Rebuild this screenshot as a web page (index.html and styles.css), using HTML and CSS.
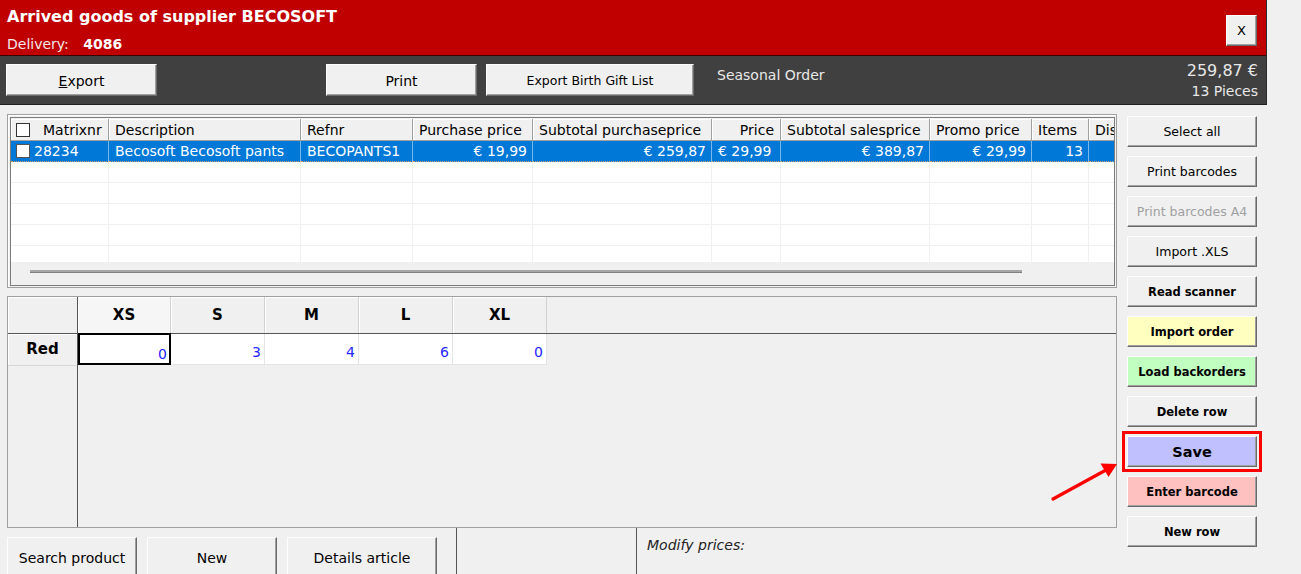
FILE: index.html
```html
<!DOCTYPE html>
<html lang="en">
<head>
    <meta charset="UTF-8">
    <title>Arrived goods of supplier BECOSOFT</title>
    <link rel="stylesheet" href="styles.css">
</head>
<body>
    <div class="window">
        <div class="titlebar">
            <div>
                <div class="title">Arrived goods of supplier BECOSOFT</div>
                <div class="delivery">Delivery: <b>4086</b></div>
            </div>
            <button class="btn close">X</button>
        </div>
        <div class="toolbar">
            <button class="btn tb-export"><u>E</u>xport</button>
            <button class="btn tb-print">Print</button>
            <button class="btn tb-birth">Export Birth Gift List</button>
            <div class="order-type">Seasonal Order</div>
            <div class="totals">
                <div class="total-amount">259,87 €</div>
                <div class="total-pieces">13 Pieces</div>
            </div>
        </div>
    </div>

    <div class="content">
        <div class="main">
            <div class="grid-box">
                <div class="grid">
                    <div class="grid-row grid-head">
                        <div class="cell"><span class="check"></span><span class="head-first">Matrixnr</span></div>
                        <div class="cell">Description</div>
                        <div class="cell">Refnr</div>
                        <div class="cell">Purchase price</div>
                        <div class="cell">Subtotal purchaseprice</div>
                        <div class="cell num">Price</div>
                        <div class="cell">Subtotal salesprice</div>
                        <div class="cell">Promo price</div>
                        <div class="cell">Items</div>
                        <div class="cell">Dis</div>
                    </div>
                    <div class="grid-body">
                        <div class="grid-row selected">
                            <div class="cell"><span class="check"></span>28234</div>
                            <div class="cell">Becosoft Becosoft pants</div>
                            <div class="cell">BECOPANTS1</div>
                            <div class="cell num">€ 19,99</div>
                            <div class="cell num">€ 259,87</div>
                            <div class="cell">€ 29,99</div>
                            <div class="cell num">€ 389,87</div>
                            <div class="cell num">€ 29,99</div>
                            <div class="cell num">13</div>
                            <div class="cell"></div>
                        </div>
                        <div class="grid-row"><div class="cell"></div><div class="cell"></div><div class="cell"></div><div class="cell"></div><div class="cell"></div><div class="cell"></div><div class="cell"></div><div class="cell"></div><div class="cell"></div><div class="cell"></div></div>
                        <div class="grid-row"><div class="cell"></div><div class="cell"></div><div class="cell"></div><div class="cell"></div><div class="cell"></div><div class="cell"></div><div class="cell"></div><div class="cell"></div><div class="cell"></div><div class="cell"></div></div>
                        <div class="grid-row"><div class="cell"></div><div class="cell"></div><div class="cell"></div><div class="cell"></div><div class="cell"></div><div class="cell"></div><div class="cell"></div><div class="cell"></div><div class="cell"></div><div class="cell"></div></div>
                        <div class="grid-row"><div class="cell"></div><div class="cell"></div><div class="cell"></div><div class="cell"></div><div class="cell"></div><div class="cell"></div><div class="cell"></div><div class="cell"></div><div class="cell"></div><div class="cell"></div></div>
                        <div class="grid-row"><div class="cell"></div><div class="cell"></div><div class="cell"></div><div class="cell"></div><div class="cell"></div><div class="cell"></div><div class="cell"></div><div class="cell"></div><div class="cell"></div><div class="cell"></div></div>
                    </div>
                    <div class="hscroll"><div class="hscroll-thumb"></div></div>
                </div>
            </div>

            <div class="sizes">
                <div class="sizes-head">
                    <div class="corner"></div>
                    <div class="size-col active">XS</div>
                    <div class="size-col">S</div>
                    <div class="size-col">M</div>
                    <div class="size-col">L</div>
                    <div class="size-col">XL</div>
                </div>
                <div class="sizes-body">
                    <div class="row-heads">
                        <div class="row-head">Red</div>
                    </div>
                    <div class="size-values">
                        <div class="size-val focused">0</div>
                        <div class="size-val">3</div>
                        <div class="size-val">4</div>
                        <div class="size-val">6</div>
                        <div class="size-val">0</div>
                    </div>
                </div>
            </div>

            <div class="bottom">
                <button class="btn bottom-btn w-search">Search product</button>
                <button class="btn bottom-btn w-new">New</button>
                <button class="btn bottom-btn w-details">Details article</button>
                <div class="panel panel-empty"></div>
                <div class="panel panel-prices">Modify prices:</div>
            </div>
        </div>

        <div class="side">
            <button class="btn side-btn">Select all</button>
            <button class="btn side-btn">Print barcodes</button>
            <button class="btn side-btn disabled">Print barcodes A4</button>
            <button class="btn side-btn">Import .XLS</button>
            <button class="btn side-btn bold">Read scanner</button>
            <button class="btn side-btn bold yellow">Import order</button>
            <button class="btn side-btn bold green">Load backorders</button>
            <button class="btn side-btn bold">Delete row</button>
            <button class="btn side-btn save">Save</button>
            <button class="btn side-btn bold pink">Enter barcode</button>
            <button class="btn side-btn bold">New row</button>
        </div>
    </div>

    <svg class="arrow" width="90" height="60" viewBox="0 0 90 60">
        <line x1="13" y1="49" x2="66" y2="20" stroke="#f00" stroke-width="3.2" stroke-linecap="round"/>
        <polygon points="77,14 68.5,27 60.5,13.5" fill="#f00"/>
    </svg>
</body>
</html>
```

FILE: styles.css
```css
* {
    box-sizing: border-box;
}
body {
    margin: 0;
    width: 1301px;
    height: 574px;
    overflow: hidden;
    position: relative;
    background: #f0f0f0;
    font-family: "DejaVu Sans", Verdana, sans-serif;
    font-size: 14px;
    color: #000;
}
.btn {
    font-family: inherit;
    color: #000;
    background: #f0f0f0;
    border: 1px solid;
    border-color: #fdfdfd #6a6a6a #6a6a6a #fdfdfd;
    box-shadow: inset -1px -1px 0 #a0a0a0;
    padding: 0;
    cursor: default;
}

/* header */
.window {
    width: 1267px;
    border-right: 1px solid #2b2b2b;
}
.titlebar {
    height: 56px;
    background: #c00000;
    border-bottom: 1px solid #3a0000;
    color: #fff;
    display: flex;
    justify-content: space-between;
    padding: 0 9px 0 7px;
}
.title {
    font-weight: bold;
    font-size: 16px;
    margin-top: 7px;
}
.delivery {
    margin-top: 10px;
    font-size: 14px;
    color: #f4e6e6;
}
.delivery b {
    color: #fff;
    margin-left: 10px;
}
.close {
    align-self: flex-end;
    width: 31px;
    height: 31px;
    margin-bottom: 9px;
    font-size: 13px;
}
.toolbar {
    height: 49px;
    background: #404040;
    border-bottom: 1px solid #1e1e1e;
    display: flex;
    align-items: flex-start;
    padding: 8px 8px 0 6px;
}
.toolbar .btn {
    height: 32px;
    font-size: 14px;
    padding-top: 1px;
}
.tb-export {
    width: 151px;
}
.tb-print {
    width: 151px;
    margin-left: 169px;
}
.tb-birth {
    width: 208px;
    margin-left: 9px;
    font-size: 12.5px !important;
}
.order-type {
    color: #e8e8e8;
    margin-left: 23px;
    margin-top: 3px;
    font-size: 14px;
}
.totals {
    margin-left: auto;
    text-align: right;
    color: #e8e8e8;
    margin-top: -3px;
}
.total-amount {
    font-size: 16px;
}
.total-pieces {
    font-size: 14px;
    margin-top: 3px;
}

/* content */
.content {
    display: flex;
}
.main {
    width: 1117px;
    padding-left: 7px;
}

/* article grid */
.grid-box {
    margin-top: 9px;
    height: 174px;
    border: 1px solid #a0a0a0;
    padding: 2px 1px 1px 2px;
    box-shadow: inset 1px 1px 0 #fff;
}
.grid {
    height: 100%;
    border: 1px solid #7d7d7d;
    padding-top: 1px;
    overflow: hidden;
    background: #f0f0f0;
}
.grid-row {
    display: grid;
    grid-template-columns: 98px 192px 112px 120px 179px 69px 149px 102px 57px 60px;
    height: 21px;
    width: 1140px;
}
.grid-head {
    height: 22px;
}
.grid-head .cell {
    background: #f0f0f0;
    border-right: 1px solid #a0a0a0;
    border-bottom: 1px solid #a0a0a0;
    box-shadow: inset 1px 1px 0 #fff;
    padding: 0 6px;
    line-height: 22px;
}
.grid-head .cell:first-child {
    padding-left: 5px;
    display: flex;
    align-items: center;
}
.head-first {
    margin-left: 13px;
}
.grid-body {
    height: 121px;
    overflow: hidden;
    background: #fff;
}
.cell {
    white-space: nowrap;
    overflow: hidden;
    padding: 0 5px 0 6px;
    line-height: 21px;
    border-right: 1px solid #f0f0f0;
    border-bottom: 1px solid #f0f0f0;
}
.cell.num {
    text-align: right;
}
.grid-body .cell:first-child {
    padding-left: 5px;
    display: flex;
    align-items: center;
}
.selected .cell {
    background: #0078d7;
    color: #fff;
    border-right-color: #7ab7ea;
    border-bottom: 1px dotted #d0a060;
}
.check {
    display: inline-block;
    width: 14px;
    height: 14px;
    background: #fff;
    border: 1px solid #333;
    flex-shrink: 0;
}
.selected .check {
    border-color: #555;
    margin-right: 4px;
}
.hscroll {
    height: 22px;
    padding: 8px 0 0 19px;
}
.hscroll-thumb {
    width: 992px;
    height: 3px;
    background: #a8a8a8;
    border-bottom: 1px solid #808080;
}

/* size matrix */
.sizes {
    margin-top: 8px;
    height: 232px;
    border: 1px solid #a0a0a0;
    display: flex;
    flex-direction: column;
}
.sizes-head {
    display: flex;
    height: 37px;
    border-bottom: 1px solid #555;
    flex-shrink: 0;
}
.corner {
    width: 70px;
    border-right: 1px solid #555;
    box-shadow: inset 1px 1px 0 #fff;
}
.size-col {
    width: 94px;
    text-align: center;
    font-weight: bold;
    font-size: 15px;
    line-height: 36px;
    border-right: 1px solid #d2d2d2;
    box-shadow: inset 1px 1px 0 #fff;
}
.size-col.active {
    width: 93px;
    background: #f6f6f6;
}
.sizes-body {
    flex: 1;
    display: flex;
}
.row-heads {
    width: 70px;
    border-right: 1px solid #555;
}
.row-head {
    height: 32px;
    border-bottom: 1px solid #d8d8d8;
    box-shadow: inset 1px 1px 0 #fff;
    text-align: center;
    font-weight: bold;
    font-size: 15px;
    line-height: 31px;
}
.size-values {
    display: flex;
    align-items: flex-start;
}
.size-val {
    width: 94px;
    height: 31px;
    background: #fff;
    border-right: 1px solid #e4e4e4;
    border-bottom: 1px solid #e4e4e4;
    text-align: right;
    padding: 10px 3px 0 0;
    color: #2525ff;
    font-size: 14px;
}
.size-val.focused {
    width: 93px;
    margin-top: -1px;
    height: 32px;
    border: 2px solid #000;
    padding: 11px 2px 0 0;
}

/* bottom strip */
.bottom {
    display: flex;
    height: 50px;
}
.bottom-btn {
    margin-top: 9px;
    height: 42px;
    font-size: 14px;
    margin-right: 10px;
}
.w-search {
    width: 130px;
}
.w-new {
    width: 130px;
}
.w-details {
    width: 150px;
}
.panel {
    border-left: 1px solid #555;
}
.panel-empty {
    width: 180px;
    margin-left: 9px;
}
.panel-prices {
    flex: 1;
    font-style: italic;
    padding: 9px 0 0 10px;
    color: #222;
}

/* side buttons */
.side {
    width: 130px;
    margin-left: 10px;
    padding-top: 11px;
    display: flex;
    flex-direction: column;
    gap: 9px;
}
.side-btn {
    height: 31px;
    font-size: 12.5px;
}
.side-btn.bold {
    font-weight: bold;
    font-size: 11.5px;
}
.side-btn.disabled {
    color: #a0a0a0;
}
.yellow {
    background: #ffffc0;
}
.green {
    background: #c0ffc0;
}
.pink {
    background: #ffc0c0;
}
.save {
    background: #c0c0ff;
    font-weight: bold;
    font-size: 14.5px;
    outline: 3px solid #f00;
    outline-offset: 2px;
}

/* annotation */
.arrow {
    position: absolute;
    left: 1040px;
    top: 450px;
}
```
